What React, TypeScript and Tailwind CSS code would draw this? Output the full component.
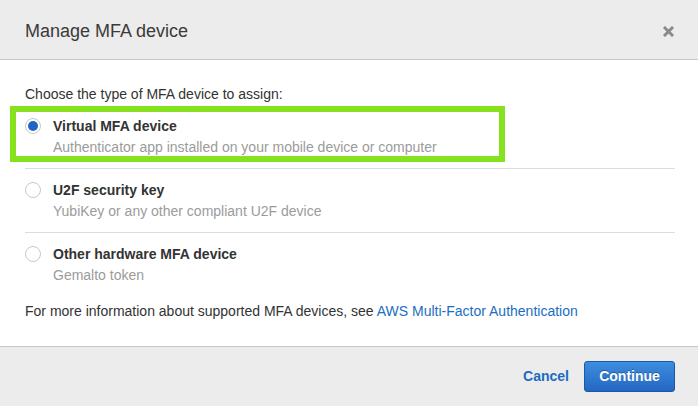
const options = [
  {
    label: "Virtual MFA device",
    hint: "Authenticator app installed on your mobile device or computer",
    checked: true,
  },
  {
    label: "U2F security key",
    hint: "YubiKey or any other compliant U2F device",
    checked: false,
  },
  {
    label: "Other hardware MFA device",
    hint: "Gemalto token",
    checked: false,
  },
];

function Radio({ checked }: { checked: boolean }) {
  return (
    <span className="flex h-4 w-4 shrink-0 items-center justify-center rounded-full border border-[#c9c9c9] bg-white">
      {checked && <span className="h-[10px] w-[10px] rounded-full bg-[#1f66c4]" />}
    </span>
  );
}

export default function App() {
  return (
    <div
      className="flex h-[406px] w-[698px] flex-col bg-white text-[14px] text-[#333]"
      style={{ fontFamily: '"Liberation Sans", Arial, sans-serif' }}
    >
      {/* header */}
      <div className="flex h-[60px] shrink-0 items-center justify-between border-b border-[#c8c8c8] bg-[#ececec] pl-[25px] pr-[23px] pt-[3px]">
        <h1 className="text-[18px] leading-[22px] text-[#3a3a3a]">Manage MFA device</h1>
        <svg width="11" height="11" viewBox="0 0 11 11" className="mr-[1px]">
          <path d="M2 2 L9 9 M9 2 L2 9" stroke="#8a8a8a" strokeWidth="3" strokeLinecap="square" />
        </svg>
      </div>

      {/* body */}
      <div className="flex-1 pl-[25px] pr-[23px] pt-[24px]">
        <p className="mb-[1px] leading-[20px]">Choose the type of MFA device to assign:</p>
        {options.map((o, i) => (
          <div
            key={o.label}
            className={`relative flex gap-3 pb-[11px] pt-[11px] ${
              i < options.length - 1 ? "border-b border-[#dcdcdc]" : ""
            }`}
          >
            <div className="flex h-5 items-center">
              <Radio checked={o.checked} />
            </div>
            <div>
              <div className="font-bold leading-[20px] text-[#333]">{o.label}</div>
              <div className="mt-[1px] leading-[20px] text-[#9b9b9b]">{o.hint}</div>
            </div>
            {i === 0 && (
              <div className="pointer-events-none absolute left-[-15px] top-[1px] h-[56px] w-[495px] border-[6px] border-[#86e11f]" />
            )}
          </div>
        ))}
        <p className="mt-[5px] leading-[20px]">
          For more information about supported MFA devices, see{" "}
          <a className="text-[#1b6ec2]">AWS Multi-Factor Authentication</a>
        </p>
      </div>

      {/* footer */}
      <div className="flex h-[60px] shrink-0 items-center justify-end gap-[15px] border-t border-[#c8c8c8] bg-[#ececec] pr-[23px]">
        <button className="font-bold text-[#1c6bbf]">Cancel</button>
        <button className="h-[31px] w-[91px] rounded-[3px] border border-[#1d58a6] bg-gradient-to-b from-[#3d8de0] to-[#2467c2] font-bold text-white [text-shadow:0_-1px_0_rgba(0,0,0,0.3)]">
          Continue
        </button>
      </div>
    </div>
  );
}
